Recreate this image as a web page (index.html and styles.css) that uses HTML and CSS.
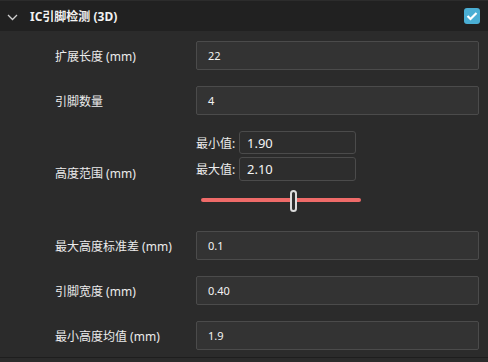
FILE: index.html
```html
<!DOCTYPE html>
<html>
<head>
<meta charset="utf-8">
<link rel="stylesheet" href="styles.css">
</head>
<body>
<div class="panel">
  <div class="header">
    <svg class="chev" width="11" height="7" viewBox="0 0 11 7"><path d="M1 1 L5.5 5.5 L10 1" fill="none" stroke="#d0d0d0" stroke-width="1.3"/></svg>
    <span class="title">IC引脚检测 (3D)</span>
    <span class="check"><svg width="12" height="10" viewBox="0 0 12 10"><path d="M1.5 5 L4.5 8 L10.5 2" fill="none" stroke="#fff" stroke-width="2.2"/></svg></span>
  </div>
  <div class="body">
    <div class="row">
      <div class="label">扩展长度 (mm)</div>
      <div class="input">22</div>
    </div>
    <div class="row">
      <div class="label">引脚数量</div>
      <div class="input">4</div>
    </div>
    <div class="row">
      <div class="label">高度范围 (mm)</div>
      <div class="range">
        <div class="mm"><span class="mm-label">最小值:</span><div class="small-input first">1.90</div></div>
        <div class="mm"><span class="mm-label">最大值:</span><div class="small-input">2.10</div></div>
        <div class="slider"><div class="track"></div><div class="thumb"></div></div>
      </div>
    </div>
    <div class="row">
      <div class="label">最大高度标准差 (mm)</div>
      <div class="input">0.1</div>
    </div>
    <div class="row">
      <div class="label">引脚宽度 (mm)</div>
      <div class="input">0.40</div>
    </div>
    <div class="row">
      <div class="label">最小高度均值 (mm)</div>
      <div class="input">1.9</div>
    </div>
  </div>
</div>
</body>
</html>
```
FILE: styles.css
```css
html, body {
  margin: 0;
  padding: 0;
  background: #2b2b2b;
  width: 488px;
  height: 362px;
  overflow: hidden;
  font-family: "Noto Sans", "Noto Sans CJK SC", sans-serif;
  color: #ececec;
}
.panel {
  display: flex;
  flex-direction: column;
}
.header {
  height: 30px;
  border-top: 1px solid #2c2c2c;
  background: #212121;
  display: flex;
  align-items: center;
  padding: 0 8px 0 7px;
}
.chev {
  margin-top: 2px;
}
.title {
  margin-left: 12px;
  font-size: 12px;
  font-weight: bold;
  color: #f2f2f2;
}
.check {
  margin-left: auto;
  width: 16px;
  height: 16px;
  border-radius: 3px;
  background: #4aaed4;
  display: flex;
  align-items: center;
  justify-content: center;
}
.body {
  display: flex;
  flex-direction: column;
  gap: 16px;
  padding: 10px 9px 7px 55px;
  border-bottom: 1px solid #1e1e1e;
}
.row {
  display: flex;
  align-items: center;
}
.label {
  width: 141px;
  font-size: 12px;
  color: #ececec;
}
.input {
  flex: 1;
  box-sizing: border-box;
  height: 29px;
  border: 1px solid #4b4b4b;
  border-radius: 2px;
  background: #333333;
  display: flex;
  align-items: center;
  padding-left: 11px;
  font-size: 11px;
  color: #f4f4f4;
}
.range {
  display: flex;
  flex-direction: column;
  gap: 3px;
}
.mm {
  display: flex;
  align-items: center;
}
.mm-label {
  width: 43px;
  font-size: 12px;
}
.small-input {
  width: 117px;
  height: 24px;
  box-sizing: border-box;
  border: 1px solid #4b4b4b;
  border-radius: 3px;
  background: #2d2d2d;
  display: flex;
  align-items: center;
  padding-left: 7px;
  font-size: 13px;
  color: #f4f4f4;
}
.small-input.first {
  height: 23px;
}
.slider {
  position: relative;
  height: 22px;
  margin: 6px 0 3px 5px;
  width: 160px;
}
.track {
  position: absolute;
  left: 0;
  right: 0;
  top: 8px;
  height: 4px;
  border-radius: 2px;
  background: #ef6b69;
}
.thumb {
  position: absolute;
  left: 89px;
  top: 0;
  width: 7px;
  height: 22px;
  box-sizing: border-box;
  border: 2px solid #dcdcdc;
  border-radius: 4px;
  background: #2e2e2e;
}
```
